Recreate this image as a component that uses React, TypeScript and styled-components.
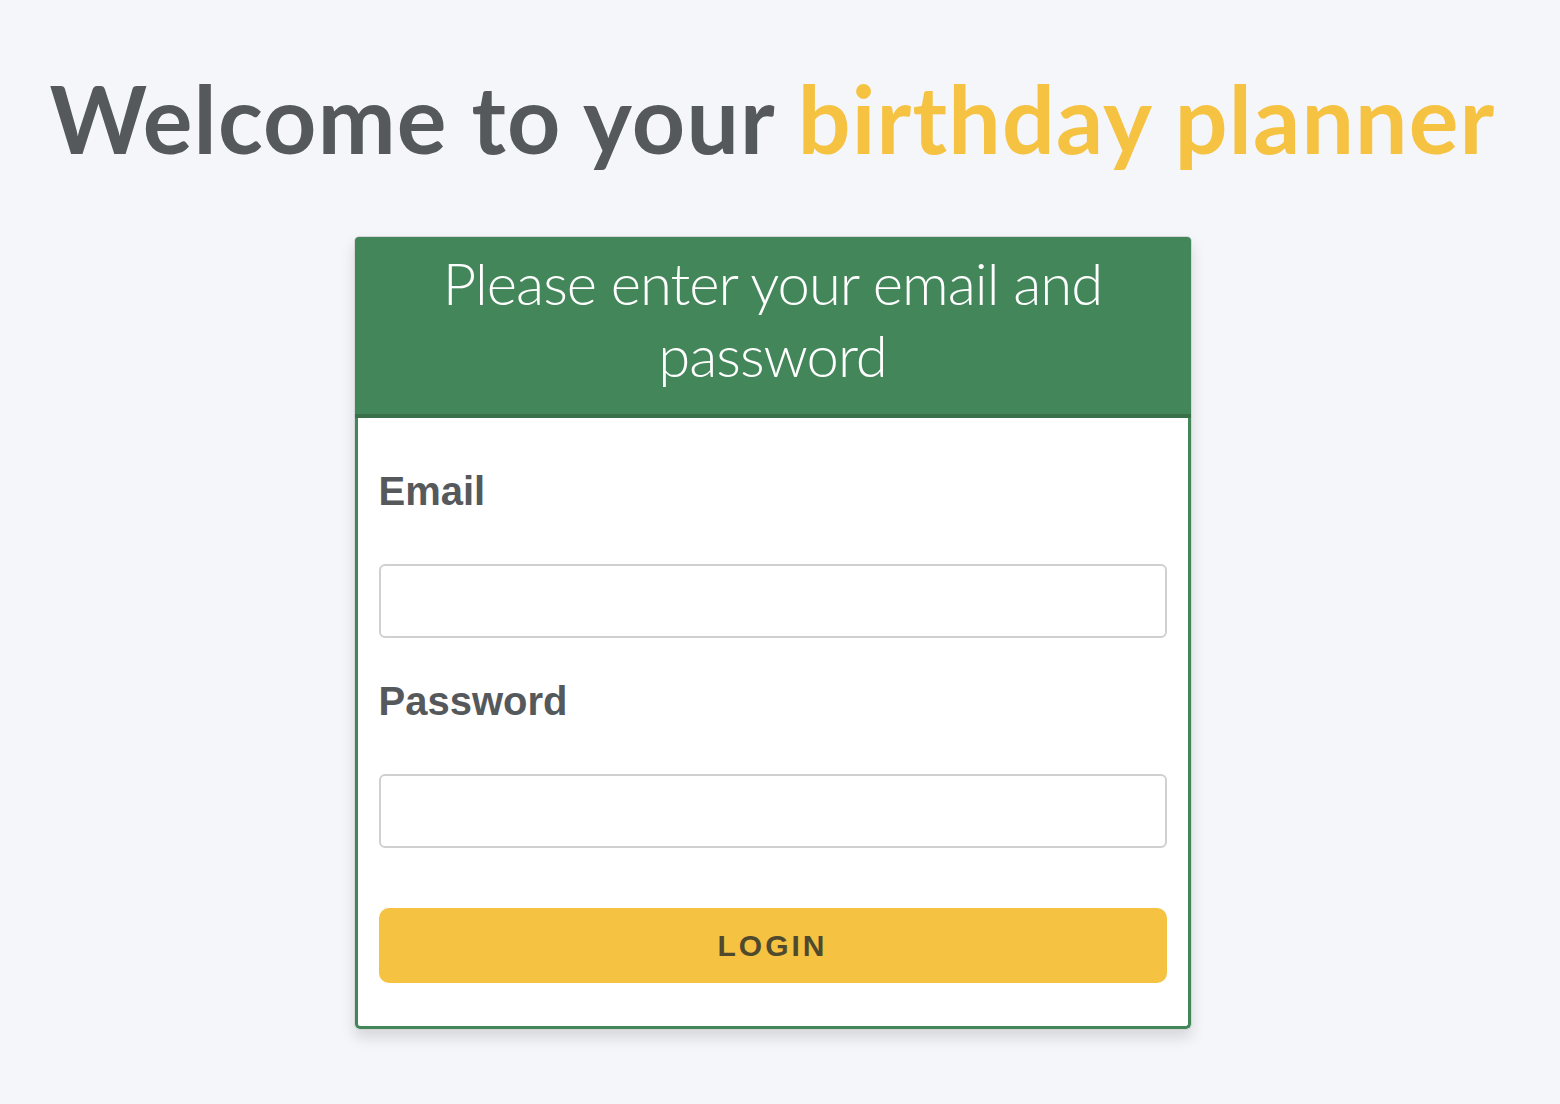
import styled, { createGlobalStyle } from 'styled-components';

const GlobalStyle = createGlobalStyle`
  html, body {
    margin: 0;
    padding: 0;
    background-color: #f5f6fa;
  }
`;

const Page = styled.div`
  min-height: 1104px;
  box-sizing: border-box;
  padding: 58px 15px 0 0;
  display: flex;
  flex-direction: column;
  align-items: center;
`;

const Title = styled.h1`
  margin: 0;
  font-family: Lato, 'Open Sans', sans-serif;
  font-weight: 700;
  font-size: 93px;
  letter-spacing: 1.2px;
  line-height: 120px;
  color: #55595c;
`;

const Accent = styled.span`
  color: #f5c242;
`;

const Card = styled.div`
  margin-top: 58px;
  width: 838px;
  box-sizing: border-box;
  border: 1px solid #d4d6d8;
  border-radius: 5px;
  box-shadow: 0 8px 14px rgba(0, 0, 0, 0.12);
  overflow: hidden;
`;

const CardHeader = styled.div`
  background-color: #428659;
  border-bottom: 4px solid #3a7049;
  padding: 10px 60px 23px;
  text-align: center;
  font-family: Lato, 'Open Sans', sans-serif;
  font-weight: 300;
  font-size: 58px;
  line-height: 72px;
  letter-spacing: -1px;
  color: #ffffff;
`;

const CardBody = styled.form`
  background-color: #ffffff;
  border: 3px solid #428659;
  border-top: none;
  border-radius: 0 0 5px 5px;
  padding: 50px 21px 43px;
  display: flex;
  flex-direction: column;
`;

const Label = styled.label`
  font-family: 'Liberation Sans', Arial, sans-serif;
  font-weight: 700;
  font-size: 40px;
  line-height: 46px;
  color: #55595c;
  margin-bottom: 50px;
`;

const Input = styled.input<{ $last?: boolean }>`
  height: 74px;
  box-sizing: border-box;
  border: 2px solid #d0d0d0;
  border-radius: 6px;
  background: #ffffff;
  margin-bottom: ${(p) => (p.$last ? '60px' : '40px')};
  outline: none;
  font-size: 24px;
`;

const Button = styled.button`
  height: 75px;
  border: none;
  border-radius: 10px;
  background-color: #f5c242;
  font-family: 'Liberation Sans', Arial, sans-serif;
  font-weight: 700;
  font-size: 30px;
  letter-spacing: 3px;
  color: #4f4a2e;
  cursor: pointer;
`;

export default function App() {
  return (
    <>
      <GlobalStyle />
      <Page>
        <Title>
          Welcome to your <Accent>birthday planner</Accent>
        </Title>
        <Card>
          <CardHeader>Please enter your email and password</CardHeader>
          <CardBody onSubmit={(e) => e.preventDefault()}>
            <Label htmlFor="email">Email</Label>
            <Input id="email" type="email" />
            <Label htmlFor="password">Password</Label>
            <Input id="password" type="password" $last />
            <Button type="submit">LOGIN</Button>
          </CardBody>
        </Card>
      </Page>
    </>
  );
}
